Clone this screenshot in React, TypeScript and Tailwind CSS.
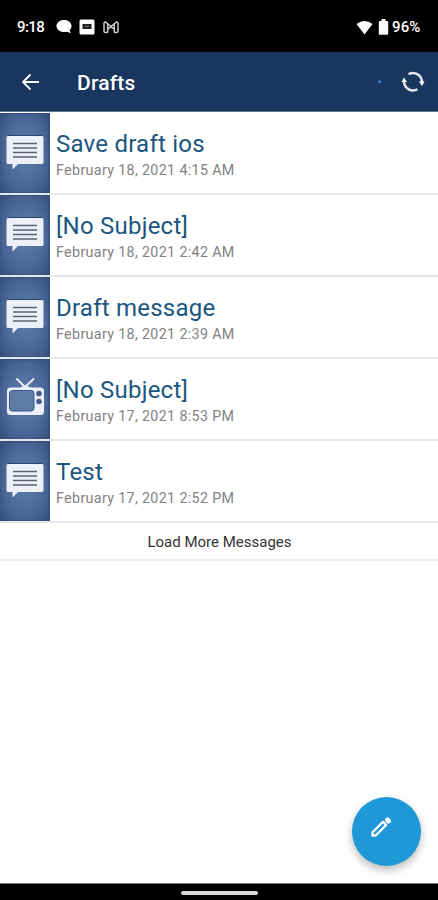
const drafts = [
  { subject: "Save draft ios", date: "February 18, 2021 4:15 AM", type: "message" },
  { subject: "[No Subject]", date: "February 18, 2021 2:42 AM", type: "message" },
  { subject: "Draft message", date: "February 18, 2021 2:39 AM", type: "message" },
  { subject: "[No Subject]", date: "February 17, 2021 8:53 PM", type: "tv" },
  { subject: "Test", date: "February 17, 2021 2:52 PM", type: "message" },
];

function MessageIcon() {
  return (
    <svg width="50" height="80" viewBox="0 0 50 80" fill="none">
      <path d="M8 22.500h34" stroke="#2c4672" strokeWidth="1" />
      <path d="M8 23h34q1.500 0 1.500 1.500v25q0 1.500-1.500 1.500H18l-5.500 5.500V51H8q-1.500 0-1.500-1.500v-25Q6.500 23 8 23z" fill="#edf0f8" />
      <path d="M13 30.500h24M13 35h24M13 39.500h24M13 44h24" stroke="#5b6274" strokeWidth="1.700" />
    </svg>
  );
}

function TvIcon() {
  return (
    <svg width="50" height="80" viewBox="0 0 50 80" fill="none">
      <path d="M17 20l8 8L33.500 20" stroke="#e6ebf5" strokeWidth="2" strokeLinecap="round" />
      <path d="M20 29q5-5 11 0z" fill="#e6ebf5" />
      <rect x="7" y="28.500" width="37" height="27.500" rx="3.500" fill="#e9eef8" />
      <rect x="9.500" y="31.500" width="24.500" height="20.500" rx="3" fill="#5f7ba8" stroke="#3c5685" strokeWidth="1" />
      <circle cx="39" cy="34.500" r="2.800" fill="#435c8a" />
      <circle cx="39" cy="42.500" r="2.800" fill="#435c8a" />
    </svg>
  );
}

function StatusBar() {
  return (
    <div className="flex h-[52px] shrink-0 items-center bg-black pt-[2px] pr-[17px] pl-[17px] text-white">
      <span className="w-[38px] text-[15px] leading-5 font-medium tracking-[-0.6px]">9:18</span>
      <svg width="18" height="16" viewBox="0 0 18 16" fill="#fff">
        <path d="M9 1c4.200 0 7.500 2.600 7.500 6 0 1.700-.700 3.200-2 4.300l1.500 3-4-1.600c-.900.300-2 .400-3 .400-4.200 0-7.500-2.600-7.500-6S4.800 1 9 1z" />
      </svg>
      <svg className="ml-[6px]" width="16" height="16" viewBox="0 0 16 16">
        <rect x=".5" y=".5" width="15" height="15" rx="1.500" fill="#fff" />
        <path d="M3.500 5h9v5h-9z" fill="#222" />
        <path d="M6 7.300h4" stroke="#888" strokeWidth="1" />
      </svg>
      <svg className="ml-[8px]" width="16" height="13" viewBox="0 0 16 13" fill="none" stroke="#ccc" strokeWidth="1.500">
        <path d="M5 11.500H2.500Q1 11.500 1 10V2.500Q1 1 2.500 1L8 5.500 13.500 1Q15 1 15 2.500V10q0 1.500-1.500 1.500H11" />
        <path d="M4.700 3v8.500M11.300 3v8.500M5 8l3-2.200L11 8" />
      </svg>
      <svg className="ml-auto" width="17" height="15" viewBox="0 0 17 15" fill="#fff">
        <path d="M.500 4Q8.500-2 16.500 4L8.500 14.500z" />
      </svg>
      <svg className="ml-[5px]" width="11" height="16" viewBox="0 0 11 16" fill="#fff">
        <path d="M3.500 0h4v2H9q1.200 0 1.200 1.200v11.300q0 1.200-1.200 1.200H2Q.800 15.700.800 14.500V3.200Q.800 2 2 2h1.500z" />
      </svg>
      <span className="ml-[3px] w-[29px] text-[15px] leading-5 font-medium tracking-[0.1px] whitespace-nowrap">96%</span>
    </div>
  );
}

function Header() {
  return (
    <header className="flex h-[60px] shrink-0 items-center border-b border-[#64748b] bg-[#19365f] pr-[13px] pl-[21px] text-white">
      <svg width="19" height="18" viewBox="0 0 19 18" fill="none" stroke="#fff" strokeWidth="1.800">
        <path d="M18 9H2M9.500 1.500L2 9l7.500 7.500" />
      </svg>
      <h1 className="ml-[37px] pt-[2px] text-[21px] leading-7 font-medium tracking-[0.2px]">Drafts</h1>
      <span className="ml-auto size-[3px] rounded-full bg-[#2f89d4]" />
      <svg className="ml-[20px]" width="24" height="24" viewBox="0 0 24 24" fill="none">
        <path d="M7.500 4.200A9 9 0 0 1 20.900 12.500M16.500 19.300A9 9 0 0 1 3.100 11" stroke="#e3e8ef" strokeWidth="2.400" />
        <path d="M18 11.500h5.500l-2.500 4.500zM.500 12L3 7.500 6 12z" fill="#fff" />
      </svg>
    </header>
  );
}

export default function App() {
  return (
    <div className="flex h-[900px] w-[438px] flex-col overflow-hidden bg-white font-[Roboto,sans-serif]">
      <StatusBar />
      <Header />

      {/* Draft list */}
      <ul className="shrink-0 pt-px">
        {drafts.map((draft, i) => (
          <li key={i} className="flex h-[82px] border-b-2 border-[#e5e6e8]">
            <div className="h-full w-[50px] shrink-0 bg-[radial-gradient(ellipse_at_center,#5a79a8_15%,#4b6797_60%,#2f4977_110%)] shadow-[inset_-1px_0_2px_#304a78,inset_0_1px_3px_#3b5583]">
              {draft.type === "tv" ? <TvIcon /> : <MessageIcon />}
            </div>
            <div className="pt-4 pl-[6px]">
              <h2 className="text-[24px] leading-[30px] tracking-[0.23px] whitespace-nowrap text-[#1b5680]">{draft.subject}</h2>
              <p className="text-[14.300px] leading-[22px] tracking-[0.34px] whitespace-nowrap text-[#828282]">{draft.date}</p>
            </div>
          </li>
        ))}
      </ul>
      <button className="h-[38px] shrink-0 border-b-2 border-[#eeeeee] pt-[2px] pl-px text-center text-[15px] leading-[34px] text-[#333333]">
        Load More Messages
      </button>

      {/* Compose */}
      <div className="flex flex-1 items-end justify-end pr-[17px] pb-[17px]">
        <button className="flex size-[69px] items-center justify-center rounded-full bg-[#1e98d7] pr-[11px] pb-[9px] shadow-[0_4px_8px_rgba(0,0,0,0.28)]">
          <svg width="22" height="22" viewBox="0 0 22 22" fill="none" stroke="#fff" strokeLinejoin="round">
            <path d="M2.500 19.500v-3.200L13 5.800l3.200 3.200L5.700 19.500z" strokeWidth="2.300" />
            <path d="M17.600 4l.900.900" strokeWidth="5" strokeLinecap="round" />
          </svg>
        </button>
      </div>

      <div className="flex h-[17px] shrink-0 justify-center border-t border-[#777777] bg-black pt-[7px]">
        <div className="h-[4px] w-[77px] rounded-full bg-[#d8d8d8]" />
      </div>
    </div>
  );
}
